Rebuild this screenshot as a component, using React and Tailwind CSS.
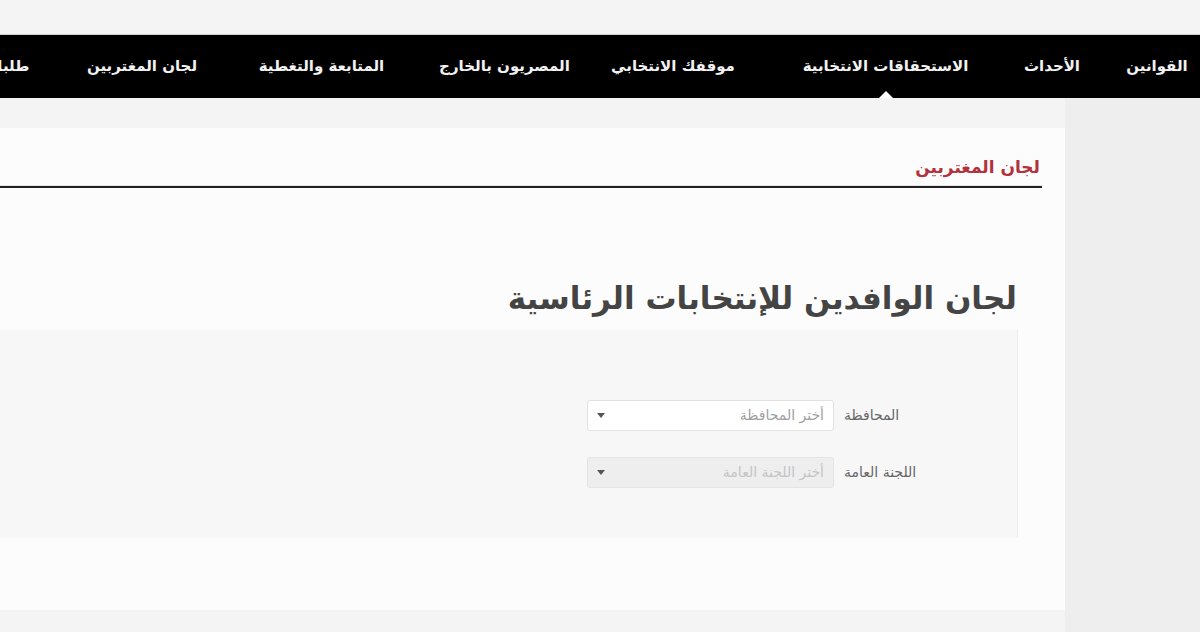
import React from "react";

const navItems = [
  { label: "القوانين", w: "w-[96px]", extra: "pl-[10px]" },
  { label: "الأحداث", w: "w-[104px]", extra: "" },
  { label: "الاستحقاقات الانتخابية", w: "w-[229px]", extra: "", active: true },
  { label: "موقفك الانتخابي", w: "w-[178px]", extra: "pr-[18px]" },
  { label: "المصريون بالخارج", w: "w-[177px]", extra: "" },
  { label: "المتابعة والتغطية", w: "w-[189px]", extra: "" },
  { label: "لجان المغتربين", w: "w-[170px]", extra: "" },
  { label: "طلبات المغتربين", w: "w-[150px]", extra: "justify-end" },
];

function Caret() {
  return (
    <svg width="8" height="5" viewBox="0 0 8 5" className="shrink-0">
      <path d="M0 0 L8 0 L4 5 Z" fill="#555" />
    </svg>
  );
}

function SelectRow({ label, placeholder, disabled }) {
  return (
    <div dir="rtl" className="flex items-center pr-[70px]">
      <div className="w-[103px] text-left text-[14px] text-[#666] whitespace-nowrap">{label}</div>
      <div
        className={
          "mr-[10px] w-[247px] h-[31px] rounded-[3px] border flex items-center justify-between px-[9px] " +
          (disabled
            ? "bg-[#eeeeee] border-[#e4e4e4]"
            : "bg-white border-[#e2e2e2]")
        }
      >
        <span className={"text-[14px] whitespace-nowrap " + (disabled ? "text-[#c4c4c4]" : "text-[#a0a0a0]")}>
          {placeholder}
        </span>
        <Caret />
      </div>
    </div>
  );
}

export default function App() {
  return (
    <div
      className="w-[1200px] h-[632px] overflow-hidden bg-[#f3f3f3] flex flex-col"
      style={{ fontFamily: '"DejaVu Sans", "Noto Sans", sans-serif' }}
    >
      <div className="h-[35px] shrink-0 bg-[#f4f4f4] border-b border-[#d0d0d0]" />
      <nav dir="rtl" className="h-[63px] shrink-0 bg-black flex items-center overflow-hidden">
        {navItems.map((it) => (
          <div
            key={it.label}
            className={
              "relative h-full shrink-0 flex items-center justify-center whitespace-nowrap text-[#f2f2f2] font-bold text-[15px] " +
              it.w +
              " " +
              it.extra
            }
          >
            {it.label}
            {it.active && (
              <span className="absolute bottom-0 left-1/2 -translate-x-1/2 w-0 h-0 border-l-[7px] border-r-[7px] border-b-[7px] border-l-transparent border-r-transparent border-b-white" />
            )}
          </div>
        ))}
      </nav>
      <div className="flex flex-1">
        <div className="w-[1065px] shrink-0 pt-[30px] bg-[#f4f4f4]">
          <div className="h-[482px] bg-[#fcfcfc] flex flex-col">
            <div
              dir="rtl"
              className="w-[1042px] h-[60px] border-b-2 border-[#222] flex items-end pb-[8px] pr-[2px] shadow-[0_-1px_0_#e8e8e8_inset]"
            >
              <span className="text-[17px] leading-[22px] font-bold text-[#b3313d]">لجان المغتربين</span>
            </div>
            <div dir="rtl" className="h-[142px] flex items-end pb-[13px] pr-[48px]">
              <h1 className="text-[31px] leading-[38px] font-bold text-[#444]">
                لجان الوافدين للإنتخابات الرئاسية
              </h1>
            </div>
            <div className="w-[1018px] h-[208px] bg-[#f7f7f7] border-r border-[#eeeeee] pt-[70px] flex flex-col gap-[26px]">
              <SelectRow label="المحافظة" placeholder="أختر المحافظة" />
              <SelectRow label="اللجنة العامة" placeholder="أختر اللجنة العامة" disabled />
            </div>
          </div>
        </div>
        <div className="flex-1 bg-[#eeeeee]" />
      </div>
    </div>
  );
}
